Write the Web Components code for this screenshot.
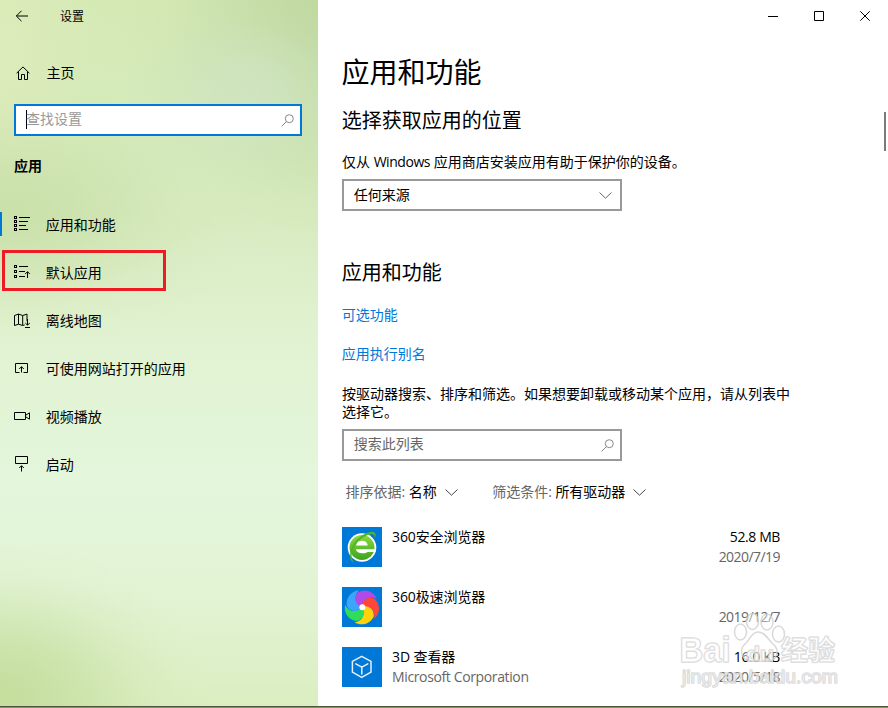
<!DOCTYPE html>
<html lang="zh-CN">
<head>
<meta charset="utf-8">
<title>设置</title>
<style>
  body {
    margin: 0;
    width: 888px;
    height: 708px;
    overflow: hidden;
    background: #fff;
    color: #000;
    font: 14px/18px "Open Sans", "Noto Sans CJK SC", sans-serif;
  }
</style>
</head>
<body>
<settings-window>
  <settings-sidebar slot="sidebar" heading="应用">
    <nav-item icon="apps" active>应用和功能</nav-item>
    <nav-item icon="defaults" marked>默认应用</nav-item>
    <nav-item icon="maps">离线地图</nav-item>
    <nav-item icon="websites">可使用网站打开的应用</nav-item>
    <nav-item icon="video">视频播放</nav-item>
    <nav-item icon="startup">启动</nav-item>
  </settings-sidebar>
  <apps-page></apps-page>
</settings-window>

<script>
const icons = {
  back: `<path d="M1.5 6H13M6.5 .8L1.3 6l5.2 5.2"/>`,
  home: `<path d="M.6 7.2L7 .9l6.4 6.3M2.5 5.8v7.7h3V8.5h3v5h3V5.8"/>`,
  apps: `<g shape-rendering="crispEdges"><path d="M.5 .5h2v2h-2zM.5 4.5h2v2h-2zM.5 8.5h2v2h-2zM.5 12.5h2v2h-2zM5 1.5h11M5 5.5h9M5 9.5h7M5 13.5h9"/></g>`,
  defaults: `<g shape-rendering="crispEdges"><path d="M.5 1.5h2v2h-2zM.5 6.5h2v2h-2zM.5 11.5h2v2h-2zM5 2.5h9M5 7.5h6M5 12.5h6"/></g><path d="M13.5 14V7.8M11.2 10l2.3-2.3L15.8 10"/>`,
  maps: `<path d="M.5 3.5l4-1.4 4.2 1.4 4.3-1.4v7M.5 3.5v10l4-1.3 4.2 1.3 2-.6M4.5 2.1v10.1M8.7 3.5v9.5M13.5 7v6M11.3 11l2.2 2.2 2.2-2.2M11 15.5h5"/>`,
  websites: `<path d="M5.5 12.5h-4v-9h12v9h-4"/><path d="M7.5 12.5V6.7M5.2 9l2.3-2.3L9.8 9"/>`,
  video: `<path d="M.5 4.5h11v7H.5zM11.5 7.3l4-2.5v6.4l-4-2.5"/>`,
  startup: `<path d="M1.5 .5h12v7h-12zM7.5 15.5V9.8M5.2 12l2.3-2.3L9.8 12"/>`,
  search: `<circle cx="8.3" cy="4.7" r="4"/><path d="M5.4 7.6L.6 12.4"/>`,
  chevron: `<path d="M.5 .5l6 5.7 6-5.7"/>`,
  min: `<path d="M0 5.5h10"/>`,
  max: `<path d="M.5 .5h9v9h-9z"/>`,
  close: `<path d="M.3 .3l9.4 9.4M9.7 .3L.3 9.7"/>`,
};

const svg = (name, w, h) =>
  `<svg width="${w}" height="${h}" viewBox="0 0 ${w} ${h}" fill="none" stroke="currentColor">${icons[name]}</svg>`;

const petal = (color, angle) =>
  `<path d="M20 20C14 19 11 11 16 5.5 23 1.5 32 4.5 35 12 29 8.5 21 11 20 20z" fill="${color}" transform="rotate(${angle} 20 20)"/>`;

const logos = {
  safe: `
    <defs><linearGradient id="g" x1="0" y1="0" x2="0" y2="1">
      <stop offset="0" stop-color="#8fd93f"/><stop offset="1" stop-color="#3ba31c"/>
    </linearGradient></defs>
    <circle cx="20" cy="20.5" r="14.3" fill="#fff"/>
    <circle cx="20" cy="20.5" r="12.5" fill="url(#g)"/>
    <path d="M14 18.4c.8-3.3 3-4.6 6-4.6s5.2 1.3 5.7 4.600z" fill="#fff"/>
    <path d="M13.800 22.300h20.200l-.4 2.600h-8c-1 .8-2.800 1.300-5 1.300-3.700 0-6.200-1.200-6.800-3.900z" fill="#fff"/>
    <path d="M32 12.500c1.800-4-.2-5.700-3.500-5C21.500 8.500 13.500 15 10.800 22c-2 6-1.500 11 1.200 13.200-4-.5-5-6-2.700-13.200C12 13.500 20.500 6.500 28.500 5c5.500-1 6.500 3.500 3.500 7.500z" fill="#4db52a"/>`,
  speed:
    petal("#b14be8", 0) +
    petal("#ff4638", 72) +
    petal("#ffd20b", 144) +
    petal("#2fdd59", 216) +
    petal("#3ba5fa", 288) +
    `<path d="M20 20C14 19 11 11 16 5.5 20 3.3 25 3.3 28.5 5.2 23 7.5 19.5 12 20 20z" fill="#b14be8"/>
    <circle cx="20.3" cy="20.3" r="3" fill="#fff"/>`,
  cube: `
    <g fill="none" stroke="#e4f0fb" stroke-width="1.5" stroke-linejoin="round" stroke-linecap="round">
      <path d="M19.7 9.3l9.3 5v10.900l-9.300 5.200-9.300-5.200V14.300zM13.800 16.800l6 3.300 6-3.300M19.800 20.100v7"/>
    </g>`,
};

// soft patch of colour with an eased falloff, rgb as "r, g, b"
const glow = (size, at, rgb, strength = 1) =>
  `radial-gradient(ellipse ${size} at ${at}, ` +
  [[1, 0], [0.92, 15], [0.72, 32], [0.45, 50], [0.2, 68], [0.06, 84], [0, 100]]
    .map(([a, p]) => `rgba(${rgb}, ${a * strength}) ${p}%`)
    .join(", ") +
  ")";

class NavItem extends HTMLElement {
  constructor() {
    super();
    this.attachShadow({ mode: "open" });
  }

  connectedCallback() {
    this.shadowRoot.innerHTML = `
      <style>
        :host { display: flex; align-items: center; height: 48px; position: relative; }
        .bar { width: 2px; height: 24px; margin: -2px 12px 0 0; }
        :host([active]) .bar { background: #0078d7; }
        svg { margin: -2px 15.7px 0 0; }
        .mark { position: absolute; left: 2px; top: 1px; width: 158px; height: 35px; border: 3px solid #ed1c24; }
      </style>
      <span class="bar"></span>
      ${svg(this.getAttribute("icon"), 16, 16)}
      <slot></slot>
      ${this.hasAttribute("marked") ? `<span class="mark"></span>` : ""}
    `;
  }
}
customElements.define("nav-item", NavItem);

class SearchField extends HTMLElement {
  constructor() {
    super();
    this.attachShadow({ mode: "open" });
  }

  connectedCallback() {
    this.shadowRoot.innerHTML = `
      <style>
        :host {
          display: flex; align-items: center; box-sizing: border-box;
          height: 32px; padding: 0 6px 0 9.7px;
          border: 2px solid #999; background: #fff; color: #666;
        }
        :host([focused]) { border-color: #0078d7; color: #999; padding-left: 10px; }
        .caret { width: 1px; height: 19px; margin-top: -1px; background: #000; display: none; }
        :host([focused]) .caret { display: block; margin-right: -1px; }
        .text { flex: 1; margin-top: -2px; }
        svg { color: #888; }
      </style>
      <span class="caret"></span>
      <span class="text"><slot></slot></span>
      ${svg("search", 13, 13)}
    `;
  }
}
customElements.define("search-field", SearchField);

class SelectBox extends HTMLElement {
  constructor() {
    super();
    this.attachShadow({ mode: "open" });
    this.shadowRoot.innerHTML = `
      <style>
        :host {
          display: flex; align-items: center; justify-content: space-between;
          box-sizing: border-box; height: 32px; padding: 0 8px 0 9.7px;
          border: 2px solid #999;
        }
        svg { color: #666; }
      </style>
      <slot></slot>
      ${svg("chevron", 13, 7)}
    `;
  }
}
customElements.define("select-box", SelectBox);

class FilterLink extends HTMLElement {
  constructor() {
    super();
    this.attachShadow({ mode: "open" });
  }

  connectedCallback() {
    this.shadowRoot.innerHTML = `
      <style>
        :host { display: flex; align-items: center; white-space: nowrap; }
        .label { color: #666; margin-right: 3.5px; }
        svg { color: #444; margin-left: 8px; }
      </style>
      <span class="label">${this.getAttribute("label")}</span>
      <slot></slot>
      ${svg("chevron", 13, 7)}
    `;
  }
}
customElements.define("filter-link", FilterLink);

class AppRow extends HTMLElement {
  constructor() {
    super();
    this.attachShadow({ mode: "open" });
  }

  connectedCallback() {
    this.shadowRoot.innerHTML = `
      <style>
        :host { display: flex; height: 40px; line-height: 20px; }
        .logo { width: 40px; height: 40px; margin-right: 10px; background: #0078d7; }
        .info { flex: 1; letter-spacing: -0.1px; }
        .meta { text-align: right; }
        .info div, .meta div { height: 20px; }
        .sub { color: #666; }
        .size { letter-spacing: -0.4px; }
        .date { letter-spacing: -0.55px; }
        .info .sub { letter-spacing: -0.37px; }
      </style>
      <svg class="logo" viewBox="0 0 40 40">${logos[this.getAttribute("logo")]}</svg>
      <div class="info">
        <div><slot></slot></div>
        <div class="sub">${this.getAttribute("publisher") || ""}</div>
      </div>
      <div class="meta">
        <div class="size">${this.getAttribute("size") || ""}</div>
        <div class="sub date">${this.getAttribute("date")}</div>
      </div>
    `;
  }
}
customElements.define("app-row", AppRow);

class SettingsSidebar extends HTMLElement {
  constructor() {
    super();
    this.attachShadow({ mode: "open" });
  }

  connectedCallback() {
    this.shadowRoot.innerHTML = `
      <style>
        :host {
          display: flex; flex-direction: column; width: 318px; height: 706px;
          background:
            ${glow("210px 160px", "0 700px", "196, 221, 156", 0.95)},
            ${glow("130px 110px", "250px 95px", "208, 229, 196", 0.8)},
            ${glow("200px 260px", "100% 20px", "190, 215, 158", 0.9)},
            ${glow("260px 140px", "10px 210px", "200, 223, 167", 0.85)},
            ${glow("110px 280px", "0 50px", "222, 236, 186", 0.8)},
            linear-gradient(#d5e9b5, #d5ebbb 18%, #daecc3 32%, #e1f3d2 50%, #e4f6db 68%, #e3f4d6 82%, #dbeec1);
        }
        .title { display: flex; align-items: center; height: 33px; padding-left: 15px; font-size: 12px; }
        .title svg { margin: -1px 31px 0 0; }
        .home { display: flex; align-items: center; height: 24px; margin-top: 28px; padding-left: 16px; }
        .home svg { margin: -1px 16.5px 0 0; }
        search-field { margin: 19px 16px 0 14px; }
        h2 { margin: 21px 0 26px 14px; font-size: 14px; line-height: 18px; font-weight: bold; }
      </style>
      <div class="title">${svg("back", 14, 12)}设置</div>
      <div class="home">${svg("home", 14, 14)}主页</div>
      <search-field focused>查找设置</search-field>
      <h2>${this.getAttribute("heading")}</h2>
      <nav><slot></slot></nav>
    `;
  }
}
customElements.define("settings-sidebar", SettingsSidebar);

class AppsPage extends HTMLElement {
  constructor() {
    super();
    this.attachShadow({ mode: "open" });
    this.shadowRoot.innerHTML = `
      <style>
        :host { display: block; padding-left: 24px; }
        h1 { margin: 20px 0 0 -.5px; font-size: 28px; line-height: 40px; font-weight: normal; }
        h2 { margin: 15px 0 0 -.3px; font-size: 20px; line-height: 28px; font-weight: normal; }
        p { margin: 18px 0 8px; }
        .latin { letter-spacing: -0.45px; }
        select-box, search-field { width: 280px; }
        .second { margin-top: 48px; }
        a { display: block; margin: 21px 0 0 -.3px; color: #0078d7; }
        .second + a { margin-top: 19px; }
        .hint { width: 456px; margin-top: 22px; }
        .filters { display: flex; gap: 34.5px; margin: 22px 0 26px; padding-left: 3.5px; height: 18px; }
        .list { display: grid; gap: 20px; width: 438px; }
      </style>
      <h1>应用和功能</h1>
      <h2>选择获取应用的位置</h2>
      <p>仅从 <span class="latin">Windows</span> 应用商店安装应用有助于保护你的设备。</p>
      <select-box>任何来源</select-box>
      <h2 class="second">应用和功能</h2>
      <a>可选功能</a>
      <a>应用执行别名</a>
      <p class="hint">按驱动器搜索、排序和筛选。如果想要卸载或移动某个应用，请从列表中选择它。</p>
      <search-field>搜索此列表</search-field>
      <div class="filters">
        <filter-link label="排序依据:">名称</filter-link>
        <filter-link label="筛选条件:">所有驱动器</filter-link>
      </div>
      <div class="list">
        <app-row logo="safe" size="52.8 MB" date="2020/7/19">360安全浏览器</app-row>
        <app-row logo="speed" date="2019/12/7">360极速浏览器</app-row>
        <app-row logo="cube" publisher="Microsoft Corporation" size="16.0 KB" date="2020/5/18">3D 查看器</app-row>
      </div>
    `;
  }
}
customElements.define("apps-page", AppsPage);

class WaterMark extends HTMLElement {
  constructor() {
    super();
    this.attachShadow({ mode: "open" });
    this.shadowRoot.innerHTML = `
      <style>
        :host { display: block; }
        svg { display: block; }
        text { font-family: "Liberation Sans", "Noto Sans CJK SC", sans-serif; paint-order: stroke; }
      </style>
      <svg width="168" height="84" viewBox="0 0 168 84" fill="#fff" fill-opacity=".4" stroke="#ccc" stroke-opacity=".75" stroke-width="1.5" stroke-linejoin="round">
        <ellipse cx="64.5" cy="24" rx="6" ry="8"/>
        <ellipse cx="76.5" cy="13.5" rx="6" ry="8"/>
        <ellipse cx="91" cy="14" rx="6" ry="8"/>
        <ellipse cx="102.5" cy="26" rx="6" ry="8"/>
        <path d="M82 24c-6 0-8 7-12 11-5 4-6 10-2 15 4 5 10 3 15 3s12 2 16-3c4-6 2-11-3-15-4-4-7-11-14-11z"/>
        <text x="3.5" y="54" font-size="35" font-weight="bold" textLength="51" lengthAdjust="spacingAndGlyphs">Bai</text>
        <text x="70" y="53" font-size="21" font-weight="bold" textLength="28" lengthAdjust="spacingAndGlyphs">du</text>
        <text x="105" y="51.5" font-size="27" font-weight="bold" textLength="54" lengthAdjust="spacingAndGlyphs">经验</text>
        <text x="6" y="74.5" font-size="19" textLength="156" lengthAdjust="spacingAndGlyphs">jingyan.baidu.com</text>
      </svg>
    `;
  }
}
customElements.define("water-mark", WaterMark);

class SettingsWindow extends HTMLElement {
  constructor() {
    super();
    this.attachShadow({ mode: "open" });
    this.shadowRoot.innerHTML = `
      <style>
        :host { display: block; position: relative; height: 708px; }
        .frame { display: flex; height: 706px; }
        main { flex: 1; min-width: 0; }
        .controls { display: flex; justify-content: flex-end; height: 32px; }
        .controls span { display: grid; place-items: center; width: 46px; }
        .edge { height: 1px; background: #4d553c; border-bottom: 1px solid #7e9d4c; }
        .thumb { position: absolute; left: 884px; top: 112px; width: 2px; height: 39px; background: #7a7a7a; }
        water-mark { position: absolute; left: 676px; top: 608px; }
      </style>
      <div class="frame">
        <slot name="sidebar"></slot>
        <main>
          <div class="controls">
            <span>${svg("min", 10, 10)}</span>
            <span>${svg("max", 10, 10)}</span>
            <span>${svg("close", 10, 10)}</span>
          </div>
          <slot></slot>
        </main>
      </div>
      <div class="edge"></div>
      <div class="thumb"></div>
      <water-mark></water-mark>
    `;
  }
}
customElements.define("settings-window", SettingsWindow);
</script>
</body>
</html>
